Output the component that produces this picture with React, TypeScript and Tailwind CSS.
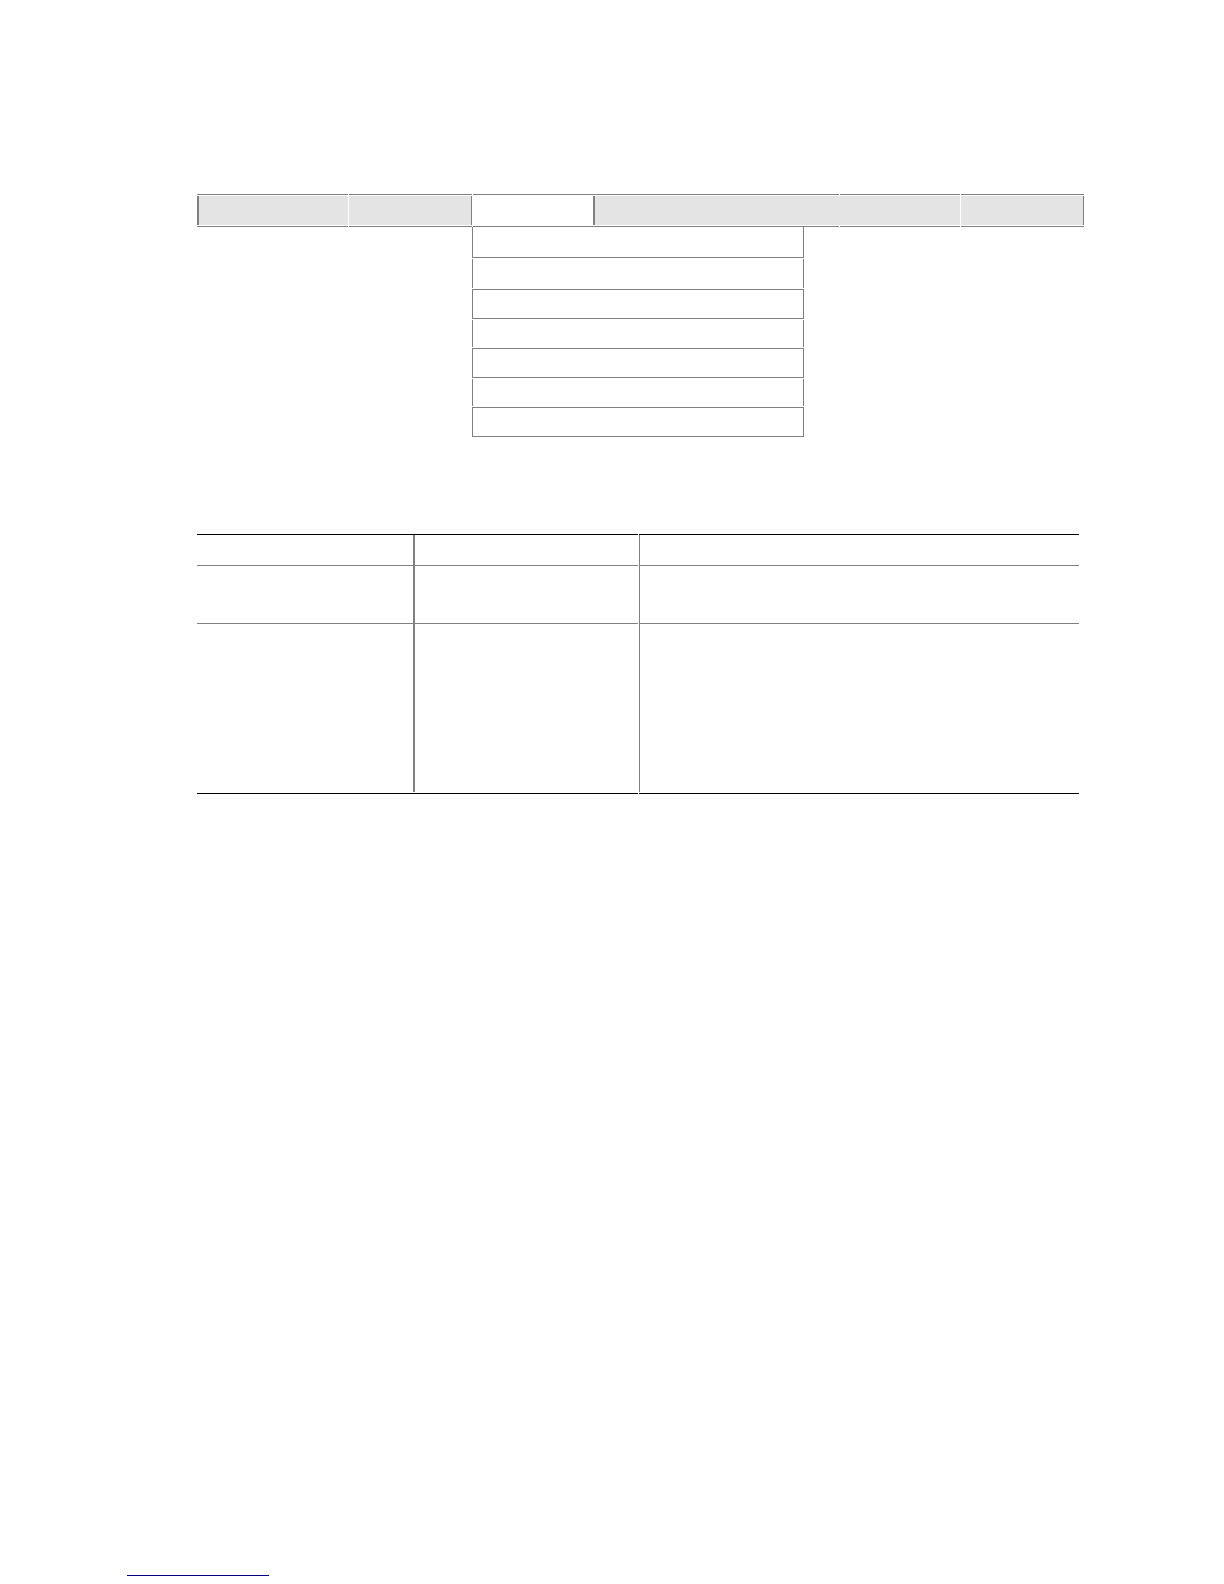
interface MenuCell {
  label: string;
  cell: string;
  fill: string;
}

// the open tab is white, all others are grey
const menuCells: MenuCell[] = [
  { label: 'Menu 1', cell: 'mr-px', fill: 'bg-[#e4e4e4] border-l-2' },
  { label: 'Menu 2', cell: 'mr-px', fill: 'bg-[#e4e4e4] border-r' },
  { label: 'Menu 3', cell: '', fill: 'bg-white border-r-2' },
  { label: 'Menu 4', cell: 'mr-px', fill: 'bg-[#e4e4e4] -mr-px' },
  { label: 'Menu 5', cell: 'mr-px', fill: 'bg-[#e4e4e4]' },
  { label: 'Menu 6', cell: '', fill: 'bg-[#e4e4e4] border-r' },
];

const dropdownItems = [
  'h-[31px] border-b',
  'h-[29px]',
  'h-[30px] border-y',
  'h-[27px]',
  'h-[30px] border-y',
  'h-[27px]',
  'h-[30px] border-y',
];

const tableRows = [
  { line: 'border-t border-black', height: 'h-[30px]' },
  { line: 'border-t border-[#808080]', height: 'h-[57px]' },
  { line: 'border-t border-t-[#808080] border-b border-b-black pb-px', height: 'h-[168px]' },
];

function MenuBar() {
  return (
    <nav>
      <ul className="grid grid-cols-[152fr_124fr_122fr_245fr_121fr_123fr]">
        {menuCells.map((item) => (
          <li key={item.label} className={item.cell}>
            <button
              type="button"
              aria-label={item.label}
              className="block w-full border-y border-[#808080] py-px"
            >
              <span className={`block h-[29px] border-[#808080] ${item.fill}`} />
            </button>
          </li>
        ))}
      </ul>
      <div className="grid grid-cols-[275fr_332fr_280fr]">
        <ul className="col-start-2 flex flex-col gap-px">
          {dropdownItems.map((item, index) => (
            <li key={index}>
              <button
                type="button"
                aria-label={`Item ${index + 1}`}
                className={`block w-full border-x border-[#808080] ${item}`}
              />
            </li>
          ))}
        </ul>
      </div>
    </nav>
  );
}

function InfoTable() {
  return (
    <table className="w-full table-fixed border-separate border-spacing-0">
      <colgroup>
        <col className="w-[218px]" />
        <col className="w-[223px]" />
        <col className="w-px" />
        <col />
      </colgroup>
      <tbody>
        {tableRows.map((row) => (
          <tr key={row.height}>
            <td className={`p-0 ${row.line}`}>
              <div className={`border-r-2 border-[#808080] ${row.height}`} />
            </td>
            <td className={`p-0 ${row.line}`} />
            <td className="p-0" />
            <td className={`p-0 ${row.line}`}>
              <div className={`border-l border-[#808080] ${row.height}`} />
            </td>
          </tr>
        ))}
      </tbody>
    </table>
  );
}

export default function App() {
  return (
    <div className="flex min-h-screen flex-col bg-white font-['Liberation_Sans',sans-serif]">
      <main className="pt-[194px] pl-[197px]">
        <div className="pr-[140px]">
          <MenuBar />
        </div>
        <div className="pt-[97px] pr-[145px]">
          <InfoTable />
        </div>
      </main>
      <footer className="mt-auto pb-2 pl-[127px]">
        <a href="#" aria-label="Link" className="block h-4 w-[142px] border-b border-[#000080]" />
      </footer>
    </div>
  );
}
